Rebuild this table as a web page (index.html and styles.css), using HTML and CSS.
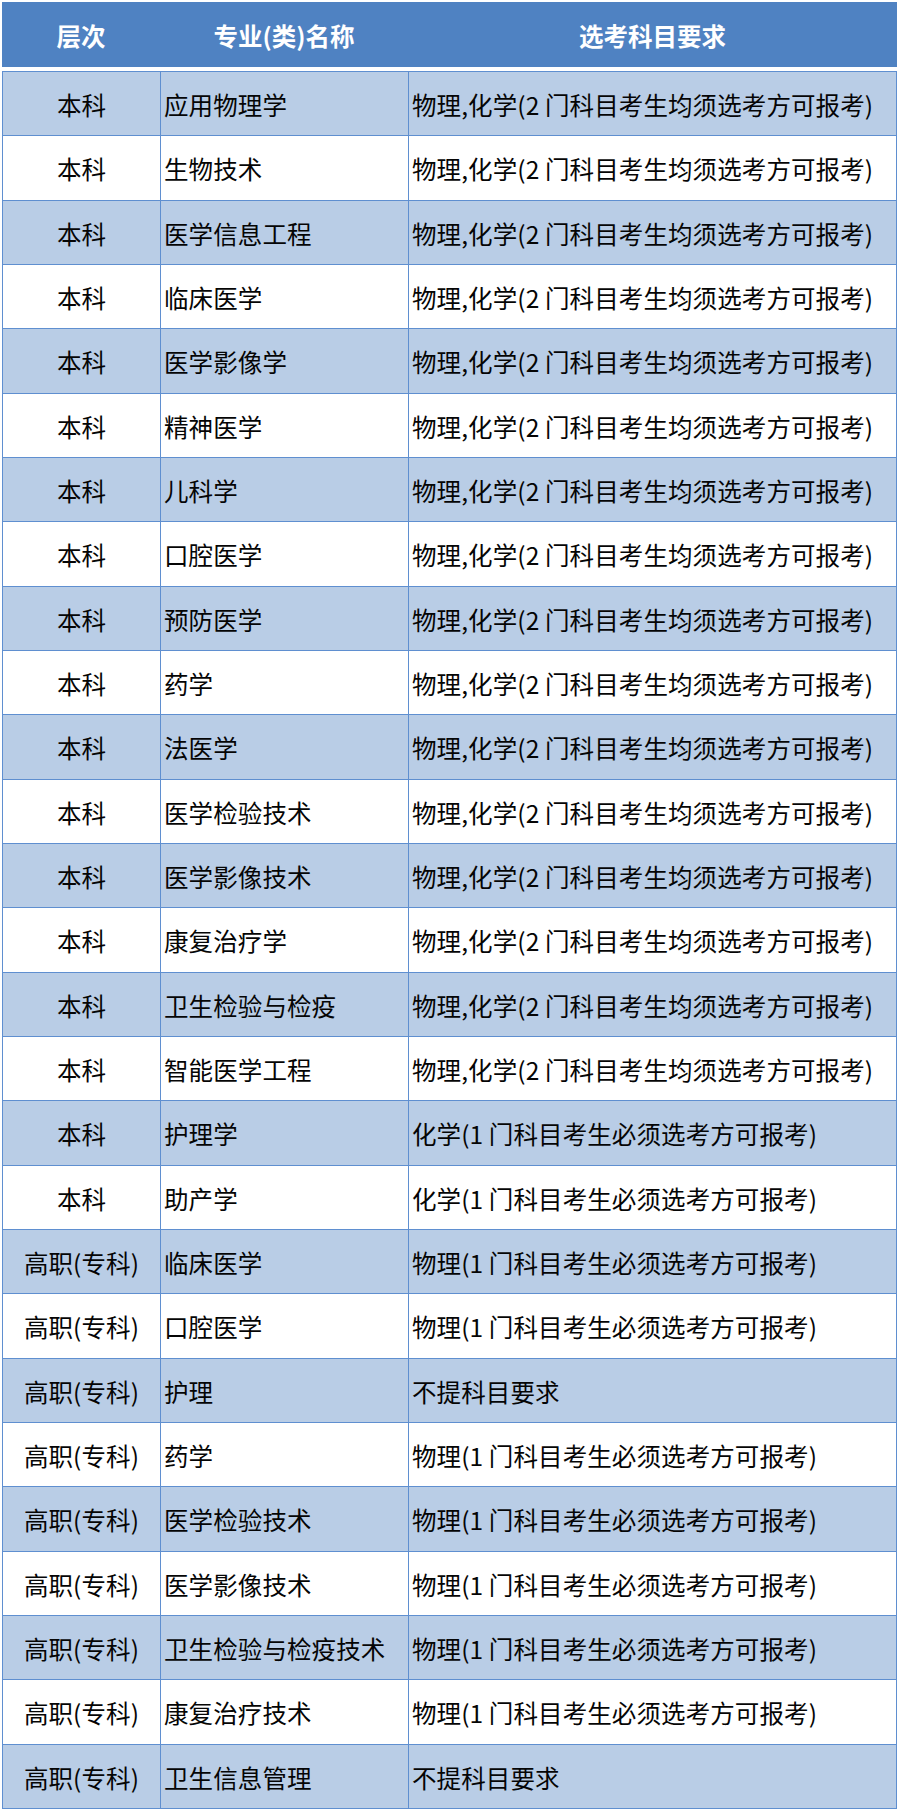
FILE: index.html
```html
<!DOCTYPE html>
<html lang="zh-CN">
<head>
<meta charset="utf-8">
<title>选考科目要求</title>
<link rel="stylesheet" href="styles.css">
</head>
<body>
<div class="sheet">
  <div class="head">
    <div class="hc">层次</div>
    <div class="hc">专业(类)名称</div>
    <div class="hc">选考科目要求</div>
  </div>
  <div class="grid">
    <div class="c lv b">本科</div><div class="c b">应用物理学</div><div class="c b">物理,化学(2 门科目考生均须选考方可报考)</div>
    <div class="c lv">本科</div><div class="c">生物技术</div><div class="c">物理,化学(2 门科目考生均须选考方可报考)</div>
    <div class="c lv b">本科</div><div class="c b">医学信息工程</div><div class="c b">物理,化学(2 门科目考生均须选考方可报考)</div>
    <div class="c lv">本科</div><div class="c">临床医学</div><div class="c">物理,化学(2 门科目考生均须选考方可报考)</div>
    <div class="c lv b">本科</div><div class="c b">医学影像学</div><div class="c b">物理,化学(2 门科目考生均须选考方可报考)</div>
    <div class="c lv">本科</div><div class="c">精神医学</div><div class="c">物理,化学(2 门科目考生均须选考方可报考)</div>
    <div class="c lv b">本科</div><div class="c b">儿科学</div><div class="c b">物理,化学(2 门科目考生均须选考方可报考)</div>
    <div class="c lv">本科</div><div class="c">口腔医学</div><div class="c">物理,化学(2 门科目考生均须选考方可报考)</div>
    <div class="c lv b">本科</div><div class="c b">预防医学</div><div class="c b">物理,化学(2 门科目考生均须选考方可报考)</div>
    <div class="c lv">本科</div><div class="c">药学</div><div class="c">物理,化学(2 门科目考生均须选考方可报考)</div>
    <div class="c lv b">本科</div><div class="c b">法医学</div><div class="c b">物理,化学(2 门科目考生均须选考方可报考)</div>
    <div class="c lv">本科</div><div class="c">医学检验技术</div><div class="c">物理,化学(2 门科目考生均须选考方可报考)</div>
    <div class="c lv b">本科</div><div class="c b">医学影像技术</div><div class="c b">物理,化学(2 门科目考生均须选考方可报考)</div>
    <div class="c lv">本科</div><div class="c">康复治疗学</div><div class="c">物理,化学(2 门科目考生均须选考方可报考)</div>
    <div class="c lv b">本科</div><div class="c b">卫生检验与检疫</div><div class="c b">物理,化学(2 门科目考生均须选考方可报考)</div>
    <div class="c lv">本科</div><div class="c">智能医学工程</div><div class="c">物理,化学(2 门科目考生均须选考方可报考)</div>
    <div class="c lv b">本科</div><div class="c b">护理学</div><div class="c b">化学(1 门科目考生必须选考方可报考)</div>
    <div class="c lv">本科</div><div class="c">助产学</div><div class="c">化学(1 门科目考生必须选考方可报考)</div>
    <div class="c lv b">高职(专科)</div><div class="c b">临床医学</div><div class="c b">物理(1 门科目考生必须选考方可报考)</div>
    <div class="c lv">高职(专科)</div><div class="c">口腔医学</div><div class="c">物理(1 门科目考生必须选考方可报考)</div>
    <div class="c lv b">高职(专科)</div><div class="c b">护理</div><div class="c b">不提科目要求</div>
    <div class="c lv">高职(专科)</div><div class="c">药学</div><div class="c">物理(1 门科目考生必须选考方可报考)</div>
    <div class="c lv b">高职(专科)</div><div class="c b">医学检验技术</div><div class="c b">物理(1 门科目考生必须选考方可报考)</div>
    <div class="c lv">高职(专科)</div><div class="c">医学影像技术</div><div class="c">物理(1 门科目考生必须选考方可报考)</div>
    <div class="c lv b">高职(专科)</div><div class="c b">卫生检验与检疫技术</div><div class="c b">物理(1 门科目考生必须选考方可报考)</div>
    <div class="c lv">高职(专科)</div><div class="c">康复治疗技术</div><div class="c">物理(1 门科目考生必须选考方可报考)</div>
    <div class="c lv b">高职(专科)</div><div class="c b">卫生信息管理</div><div class="c b">不提科目要求</div>
  </div>
</div>
</body>
</html>
```

FILE: styles.css
```css
html, body {
  margin: 0;
  padding: 0;
  background: #ffffff;
}

body {
  font-family: "Noto Sans CJK SC", "Noto Sans", sans-serif;
  font-size: 24.5px;
  color: #050505;
}

.sheet {
  width: 895px;
  margin: 2px 0 0 2px;
}

.head {
  display: grid;
  grid-template-columns: 158px 248px 1fr;
  height: 65px;
  background: #4f82c2;
  margin-bottom: 4px;
}

.hc {
  display: flex;
  align-items: center;
  justify-content: center;
  color: #ffffff;
  font-weight: 700;
  padding-top: 2px;
}

.grid {
  display: grid;
  grid-template-columns: 157px 247px 1fr;
  grid-auto-rows: 63.33px;
  gap: 1px;
  padding: 1px;
  background: #5f8fd0;
}

.c {
  display: flex;
  align-items: center;
  background: #ffffff;
  padding: 2px 0 0 3px;
  white-space: nowrap;
  overflow: hidden;
  letter-spacing: 0.1px;
}

.c.b {
  background: #b9cde6;
}

.c.lv {
  justify-content: center;
  padding-left: 0;
}
```
